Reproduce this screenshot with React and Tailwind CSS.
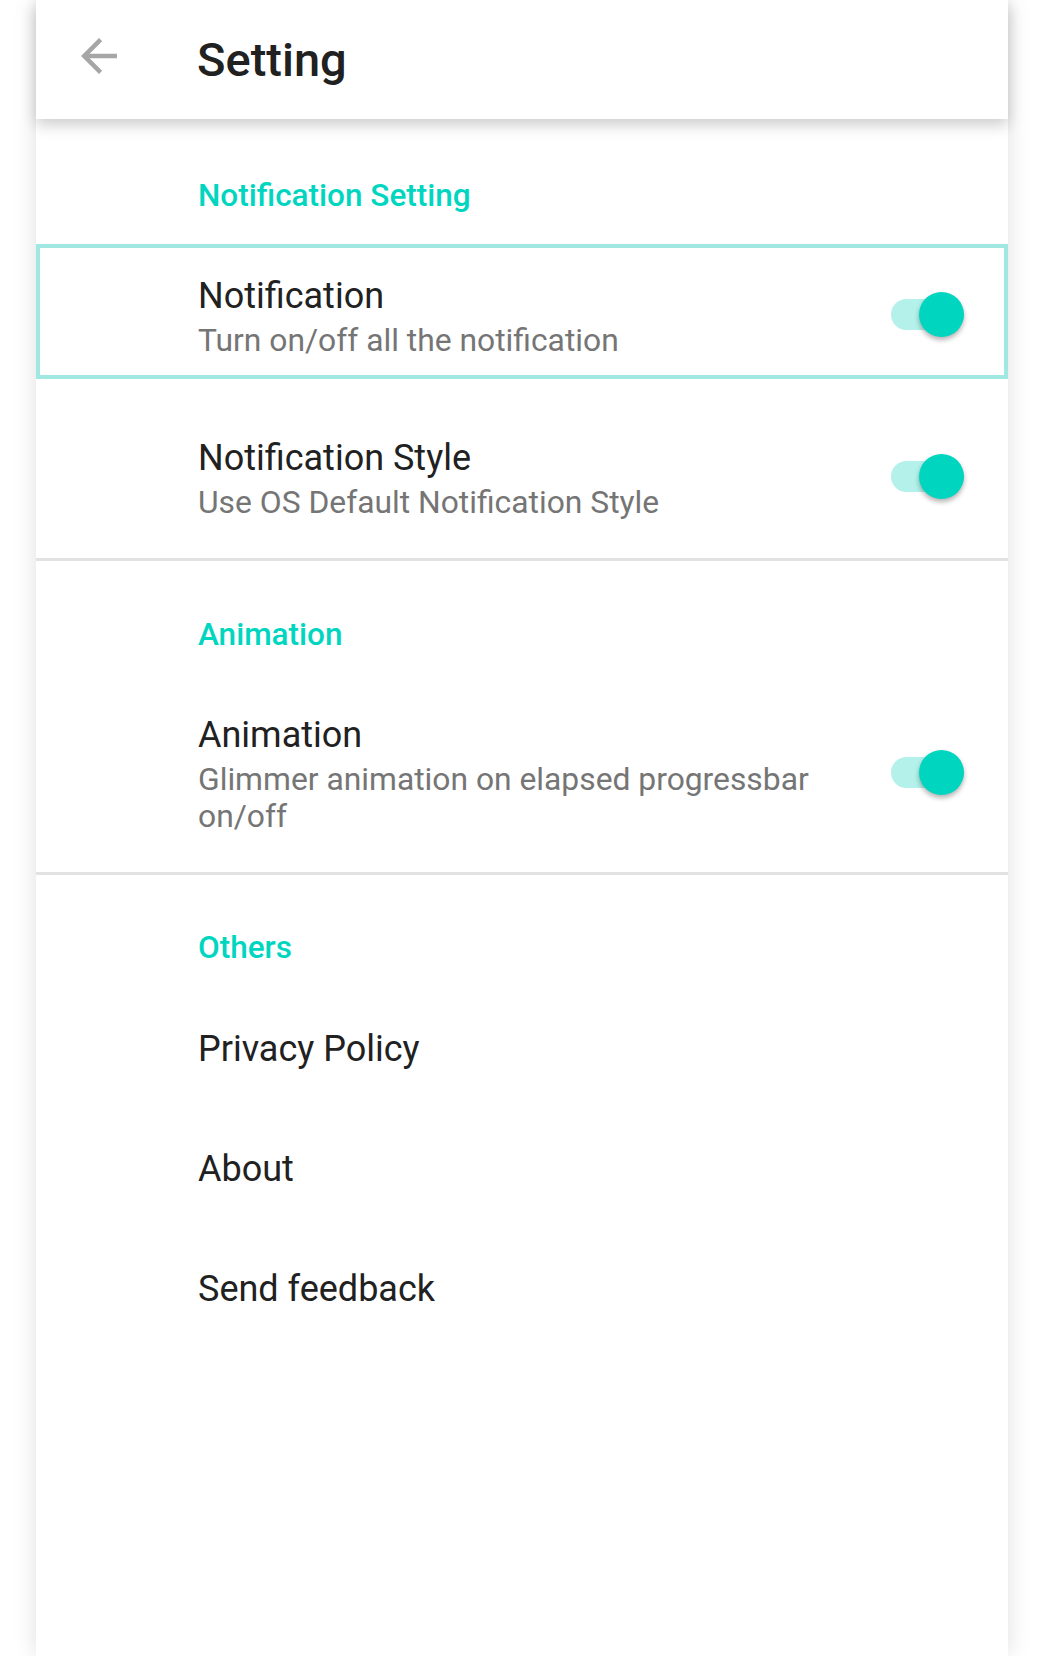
import React from "react";

const TEAL = "text-[#00d6bf]";

function Toggle() {
  return (
    <div className="relative w-[73px] h-[45px] -mt-[5px] shrink-0">
      <div className="absolute left-0 top-[7px] w-[73px] h-[31px] rounded-full bg-[#b3f1ea]" />
      <div className="absolute right-0 top-0 w-[45px] h-[45px] rounded-full bg-[#00d5bf] shadow-[0_3px_5px_rgba(0,0,0,0.3)]" />
    </div>
  );
}

function Category({ children, pt }) {
  return (
    <div className={`pl-[162px] ${pt}`}>
      <div className={`text-[31.5px] leading-[40px] font-medium ${TEAL}`}>{children}</div>
    </div>
  );
}

function ToggleRow({ title, sub, pt, pb, bordered }) {
  const pad = bordered
    ? "border-[4px] border-[#a2e8e2] pl-[158px] pr-[40px]"
    : "pl-[162px] pr-[44px]";
  return (
    <div className={`flex items-center ${pad} ${pt} ${pb}`}>
      <div className="flex-1 pr-[29px]">
        <div className="text-[36px] leading-[42px] text-[#212121]">{title}</div>
        <div className="mt-[5px] text-[31.8px] leading-[37px] text-[#757575]">{sub}</div>
      </div>
      <Toggle />
    </div>
  );
}

function Item({ children }) {
  return (
    <div className="pl-[162px] pt-[60px] pb-[18px]">
      <div className="text-[36px] leading-[42px] text-[#212121]">{children}</div>
    </div>
  );
}

export default function App() {
  return (
    <div className="min-h-[1656px] bg-white font-['Roboto',sans-serif] flex">
      <div className="mx-[36px] flex-1 flex flex-col bg-white shadow-[0_0_22px_rgba(0,0,0,0.13)]">
        <div className="relative z-10 h-[119px] bg-white flex items-center pl-[36px] shadow-[0_6px_14px_rgba(0,0,0,0.2)]">
          <svg viewBox="0 0 24 24" className="w-[54px] h-[54px] -mt-[7px] shrink-0" fill="#a6a6a6">
            <path d="M20 11H7.83l5.59-5.59L12 4l-8 8 8 8 1.41-1.41L7.83 13H20v-2z" />
          </svg>
          <div className="ml-[71px] text-[47px] leading-[44px] font-medium text-[#212121]">Setting</div>
        </div>
        <div className="flex-1 bg-white">
          <Category pt="pt-[57px]">Notification Setting</Category>
          <div className="h-[28px]" />
          <ToggleRow
            bordered
            title="Notification"
            sub="Turn on/off all the notification"
            pt="pt-[27px]"
            pb="pb-[16px]"
          />
          <ToggleRow
            title="Notification Style"
            sub="Use OS Default Notification Style"
            pt="pt-[58px]"
            pb="pb-[37px]"
          />
          <div className="h-[3px] bg-[#e2e2e2]" />
          <Category pt="pt-[54px]">Animation</Category>
          <ToggleRow
            title="Animation"
            sub="Glimmer animation on elapsed progressbar on/off"
            pt="pt-[59px]"
            pb="pb-[37px]"
          />
          <div className="h-[3px] bg-[#e2e2e2]" />
          <Category pt="pt-[53px]">Others</Category>
          <Item>Privacy Policy</Item>
          <Item>About</Item>
          <Item>Send feedback</Item>
        </div>
      </div>
    </div>
  );
}
